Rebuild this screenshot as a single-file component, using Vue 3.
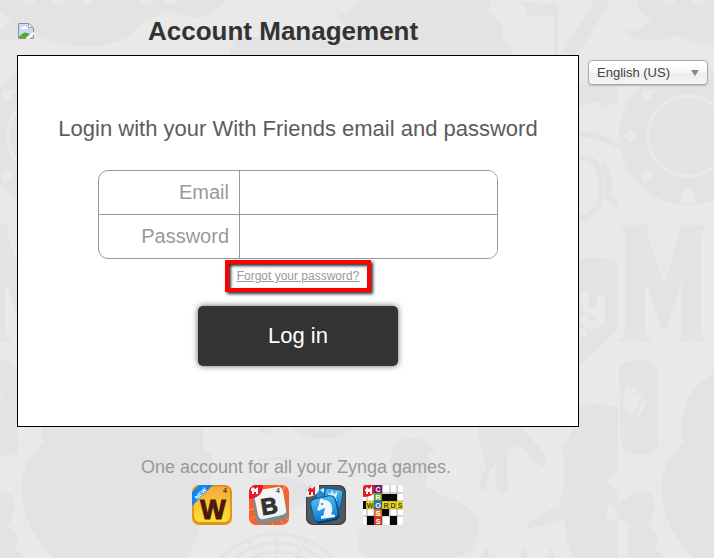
<script setup>
import { ref } from 'vue'

const language = ref('en')
const email = ref('')
const password = ref('')

const crossLetters = [
  { t: 'C', x: 15, y: 4, c: '#7b1f6d', f: '#fff' },
  { t: 'R', x: 15, y: 12, c: '#7aa63a', f: '#fff' },
  { t: 'W', x: 7, y: 20, c: '#efdc2a', f: '#4b4300' },
  { t: 'O', x: 15, y: 20, c: '#2d78c2', f: '#fff' },
  { t: 'R', x: 23, y: 20, c: '#efdc2a', f: '#4b4300' },
  { t: 'D', x: 30, y: 20, c: '#efdc2a', f: '#4b4300' },
  { t: 'S', x: 37, y: 20, c: '#efdc2a', f: '#4b4300' },
  { t: 'S', x: 15, y: 28, c: '#e8762c', f: '#fff' },
  { t: 'S', x: 15, y: 36, c: '#e2382b', f: '#fff' }
]
</script>

<template>
  <div class="page">
    <svg class="backdrop" viewBox="0 0 714 558" aria-hidden="true">
      <defs>
        <g id="tile">
          <path d="M636 0Q638 11 651 20Q641 33 622 31Q648 48 675 35Q701 47 730 47Q758 44 772 35Q781 19 798 17Q806 8 824 16Q845 22 858 8L866 0Z" />
          <circle cx="688" cy="136" r="69" />
          <circle cx="688" cy="136" r="40" fill="none" stroke="#e9e9e9" stroke-width="4" />
          <g fill="#e9e9e9">
            <ellipse cx="669" cy="0" rx="6" ry="5" /><ellipse cx="698" cy="0" rx="6" ry="5" />
            <ellipse cx="727" cy="0" rx="5" ry="4" /><ellipse cx="785" cy="0" rx="7" ry="4" />
            <ellipse cx="811" cy="0" rx="7" ry="4" />
            <path d="M623 136l7-7 7 7-7 7z" />
            <path d="M642 91q4-4 6 1q5-4 6 0l-4 3 3 5-5-1-4 3 0-5q-5 0-2-6z" />
            <path d="M642 171l4 1q2-3 4 1l4-2-1 4q3 2-2 4l-8 4q-3-5-1-12z" />
            <path d="M688 188q7 3 8 12q-3 4-6 1l2 3h-8l2-3q-4 3-6-1q1-8 8-12z" />
          </g>
          <path d="M619 225H648Q646 228 648 236L664 284L679 236Q682 228 678 225H707Q701 228 701 236V330Q702 338 707 341H676Q682 338 682 330V281L664 333L645 281V330Q646 338 653 341H618Q625 338 625 330V236Q625 228 619 225Z" />
          <path d="M619 370Q622 360 639 360Q655 361 658 369V440Q661 445 658 448Q652 455 640 455Q624 455 621 446Z" />
          <path fill="#e9e9e9" d="M626 385l12 3-3 6 8-1-11 23q-9-4-9-16zM645 396q2 10-5 19l-5 2z" />
          <path d="M714 374Q682 390 682 425Q681 439 684 443Q661 462 661 490Q664 530 694 558H826Q852 516 852 455L843 450V413L830 390Q760 340 714 374Z" />
          <path d="M618 502l6-3 3 2q1-10 13-10q15 1 14 12q0 9-3 18q0 3-5 4l6 5q7 6 6 14l-5 6q8 2 13 8H628V535q-2-7 2-11l-12-6z" />
        </g>
      </defs>
      <g fill="#e3e3e3">
        <use href="#tile" />
        <use href="#tile" x="-640" />
        <path d="M0 455Q10 457 18 452V400L0 400Z" />
        <path d="M336 0L338 12Q346 12 356 6L359 0H492L488 12Q503 18 503 38L514 55H228L236 36L350 42L347 26Q336 21 337 8Z" />
        <path d="M515 2L558 4V55H554V16H526V6Z" />
        <path d="M595 0H610L580 53H562Z" />
        <path d="M579 82L618 78V101L606 108Q600 109 602 101Q592 104 579 106Z" />
        <path d="M579 278H618V330L579 366Z" />
        <path d="M579 407Q600 401 618 408V470L605 480L618 493V558H574Q564 540 565 520L560 500Q568 480 562 450L574 427Z" />
        <path d="M579 259Q600 253 618 264V278H579Z" />
        <path d="M390 463Q391 437 412 438Q429 438 435 452L428 454Q430 473 425 486L443 496Q482 507 479 535Q472 558 448 558H368Q353 550 359 532Q377 510 373 492Q377 480 398 484Z" />
        <path d="M477 427H520L535 443Q550 455 544 467Q535 465 521 445L507 450V482Q510 492 502 496Q492 490 496 465L490 470Q487 493 481 491Q477 478 486 468Z" />
        <path d="M290 427H355Q326 449 294 431Z" />
        <path d="M527 525Q548 505 567 507V517Q550 525 527 529Z" />
        <path d="M260 427Q257 433 266 435Q274 433 272 427Z" />
        <ellipse cx="280" cy="493" rx="31" ry="16" />
        <path d="M482 558l4-12 4 12zM520 558l4-14 4 14zM547 558l4-12 4 12z" />
      </g>
      <g fill="none" stroke="#e3e3e3">
        <path stroke-width="6" d="M579 134Q598 134 618 146M579 158Q592 155 599 170Q605 195 596 209Q588 218 579 218M602 165Q611 174 608 190Q607 201 618 204" />
        <g stroke-width="3">
          <circle cx="277" cy="610" r="76" /><circle cx="277" cy="610" r="67" />
          <circle cx="277" cy="610" r="58" /><path d="M277 534V558M248 540L258 558M306 540L296 558" />
        </g>
        <ellipse cx="278" cy="470" rx="38" ry="11" stroke-width="1" />
        <ellipse cx="278" cy="466" rx="30" ry="8" stroke-width="1" />
      </g>
      <g fill="none" stroke="#e9e9e9" stroke-linecap="round">
        <path stroke-width="8" d="M585 295V305Q586 312 593 312Q601 312 601 303V295V318Q600 325 593 325Q585 325 584 319M579 333H583" />
        <path stroke-width="2" d="M342 8L360 3M348 9L357 0M345 16L350 8" />
      </g>
      <path fill="#e9e9e9" d="M609 504Q618 509 618 515L609 523Q604 513 609 504Z" />
    </svg>

    <header class="header">
      <svg class="missing" viewBox="0 0 16 16" aria-hidden="true">
        <path fill="#c6dafc" d="M1 1h10l4 4v10H1z" />
        <path fill="#fff" d="M3 6q0-2 2-2 1-2 3 0 2 0 2 2z" />
        <path fill="#57a935" d="M1 15v-1q5-6 8-4l3 1-4 4z" />
        <path fill="#fff" d="M8 15l7-6v3l-3 3z" />
        <path fill="#fff" stroke="#a0a0a0" d="M10.500 .5v4h4.500" />
        <path fill="none" stroke="#8f8f8f" d="M8 15.500H.5V.5H11l4.500 4.500V9M12 15.500h3.500V12" />
      </svg>
      <h1>Account Management</h1>
    </header>

    <div class="columns">
      <main>
        <form class="card" @submit.prevent>
          <h2>Login with your With Friends email and password</h2>
          <div class="fields">
            <div class="field">
              <label for="email">Email</label>
              <input id="email" v-model="email" type="email" />
            </div>
            <div class="field">
              <label for="password">Password</label>
              <input id="password" v-model="password" type="password" />
            </div>
          </div>
          <div class="forgot"><a href="#">Forgot your password?</a></div>
          <button class="login" type="submit">Log in</button>
        </form>

        <footer class="footer">
          <p>One account for all your Zynga games.</p>
          <div class="games">
            <svg viewBox="0 0 40 40" aria-hidden="true">
              <defs>
                <linearGradient id="gold" x2="0" y2="1">
                  <stop offset="0" stop-color="#f5a83c" /><stop offset="1" stop-color="#fae13b" />
                </linearGradient>
                <clipPath id="round"><rect width="40" height="40" rx="7" /></clipPath>
              </defs>
              <g clip-path="url(#round)">
                <rect width="40" height="40" fill="#e4941b" />
                <rect x="2" y="2" width="36" height="35" rx="6" fill="url(#gold)" />
                <text class="glyph" x="21" y="34" font-size="27" fill="#4a1a06" stroke="#4a1a06">W</text>
                <text class="glyph" x="33" y="8" font-size="7" fill="#5b3307">4</text>
                <path d="M7 0H21L0 21V7Z" fill="#1285f0" />
                <text class="glyph" x="8" y="11" font-size="6" fill="#fff" transform="rotate(-45 8 8)">NEW</text>
              </g>
            </svg>
            <svg viewBox="0 0 40 40" aria-hidden="true">
              <g clip-path="url(#round)">
                <rect width="40" height="40" fill="#f4622d" />
                <path d="M0 25l8-2M2 34l8-6M12 40l3-6M24 40l-1-5M34 40l-3-6M40 35l-5-3M30 0l-1 5M37 0l-3 5" stroke="#ff9964" />
                <path d="M3 12Q3 7 9 6L28 3Q33 2 34 7L39 27Q40 33 35 35L16 39Q10 40 7 35Z" fill="#898989" />
                <path d="M5 10Q5 6 10 5L29 2Q33 2 34 6L37 24Q38 29 33 30L15 34Q10 35 9 30Z" fill="#f3f4f4" />
                <text class="glyph" x="20" y="29" font-size="23" fill="#333" stroke="#333" transform="rotate(-9 20 20)">B</text>
                <text class="glyph" x="29" y="8" font-size="7" fill="#555">4</text>
                <path d="M0 0H14Q14 13 0 14Z" fill="#e71927" />
                <path d="M2 4L4 2L6 4L9 2V9H7V7H5V9H3V6H2Z" fill="#fff" />
              </g>
            </svg>
            <svg viewBox="0 0 40 40" aria-hidden="true">
              <defs>
                <linearGradient id="blue" x2="0" y2="1">
                  <stop offset="0" stop-color="#55baf2" /><stop offset="1" stop-color="#087bcf" />
                </linearGradient>
              </defs>
              <g clip-path="url(#round)">
                <rect width="40" height="40" fill="#343b44" />
                <rect x="1" y="1" width="38" height="38" rx="7" fill="#505862" />
                <rect x="10" y="3" width="16" height="18" rx="3" fill="#268bc7" stroke="#14578c" />
                <rect x="18" y="4" width="18" height="19" rx="3" fill="url(#blue)" stroke="#14578c" transform="rotate(8 27 13)" />
                <path d="M21 6l3 3 2-4 2 4 4-3-2 7 1 3h-8l1-3zM14 5l4-2v5z" fill="#d5eaf6" />
                <rect x="7" y="13" width="25" height="24" rx="5" fill="#06375f" transform="rotate(-12 20 25)" />
                <rect x="6" y="12" width="25" height="23" rx="5" fill="url(#blue)" stroke="#075b9f" transform="rotate(-12 19 24)" />
                <path d="M15 13L18 15Q25 15 26 22Q27 27 25 29L29 30V32L15 34V31L18 30Q17 26 20 23L16 24L13 26L11 24L13 20Q13 16 15 13Z" fill="#edf6fa" />
                <circle cx="16" cy="19" r="1" fill="#176fa6" />
                <path d="M0 0H13V5Q11 12 0 12Z" fill="#eee" />
                <path d="M2 5L4 2L6 4L9 1V10H7V7H5V10H3V6H2Z" fill="#db2028" />
              </g>
            </svg>
            <svg viewBox="0 0 40 40" aria-hidden="true">
              <defs><clipPath id="soft"><rect width="40" height="40" rx="3" /></clipPath></defs>
              <g clip-path="url(#soft)">
                <rect width="40" height="40" fill="#fff" />
                <path d="M4 8V40M19 0V40M27 0V40M34 0V40M0 8H40M0 31H40" stroke="#aaa" fill="none" />
                <path d="M19 9h15v7H19zM0 16h4v8H0zM19 24h7v7h-7zM4 31h7v9H4zM27 31h7v9h-7z" fill="#080808" />
                <g v-for="(l, i) in crossLetters" :key="i">
                  <rect :x="l.x - 4" :y="l.y - 4" width="8" height="8" :fill="l.c" stroke="#3b3516" stroke-width=".3" />
                  <text class="glyph" :x="l.x" :y="l.y + 3" font-size="7" :fill="l.f">{{ l.t }}</text>
                </g>
                <path d="M0 0H11V8Q8 12 0 12Z" fill="#e41b2b" />
                <path d="M2 5L4 2L6 4L9 1V9H7V7H5V9H3V6H2Z" fill="#fff" />
              </g>
            </svg>
          </div>
        </footer>
      </main>

      <div class="language">
        <select v-model="language" aria-label="Language">
          <option value="en">English (US)</option>
        </select>
        <svg viewBox="0 0 8 6" aria-hidden="true"><path d="M0 0h8L4 6z" fill="#888" /></svg>
      </div>
    </div>
  </div>
</template>

<style>
body {
  margin: 0;
  background: #e9e9e9;
}
</style>

<style scoped>
.page {
  position: relative;
  box-sizing: border-box;
  min-height: 100vh;
  padding: 14px 6px 32px 17px;
  overflow: hidden;
  background: #e9e9e9;
  color: #999;
  font-family: "Liberation Sans", Arial, sans-serif;
}
.backdrop {
  position: absolute;
  top: 0;
  left: 0;
  width: 714px;
}
.header,
.columns {
  position: relative;
}
.header {
  display: flex;
  align-items: center;
  gap: 114px;
  padding: 0 1px 7px;
}
.missing {
  width: 16px;
  height: 16px;
}
h1 {
  margin: 0;
  color: #333;
  font-size: 26px;
  line-height: 34px;
}
.columns {
  display: grid;
  grid-template-columns: minmax(0, 1fr) 120px;
  gap: 9px;
  align-items: start;
}
.card {
  display: flex;
  flex-direction: column;
  align-items: center;
  padding: 60px 20px;
  border: 1px solid #000;
  background: #fff;
}
h2 {
  margin: 0 0 28px;
  color: #5c5c5c;
  font-size: 22px;
  font-weight: 400;
  line-height: 26px;
}
.fields {
  box-sizing: border-box;
  width: 100%;
  max-width: 400px;
  overflow: hidden;
  border: 1px solid #999;
  border-radius: 10px;
}
.field {
  display: flex;
  height: 43px;
}
.field + .field {
  border-top: 1px solid #999;
}
.field label {
  box-sizing: border-box;
  width: 140px;
  padding-right: 10px;
  font-size: 20px;
  line-height: 43px;
  text-align: right;
}
.field input {
  flex: 1;
  min-width: 0;
  padding: 0 10px;
  border: 0;
  border-left: 1px solid #999;
  outline: 0;
  background: #fff;
  font: inherit;
  font-size: 20px;
}
.forgot {
  margin: 1px 0 14px;
  padding: 5px 8px;
  border: 4px solid #f00;
  box-shadow: 2px 2px 3px #333, inset 2px 2px 3px #333;
  font-size: 12px;
  line-height: 14px;
}
.forgot a {
  color: #999;
}
.login {
  width: 200px;
  height: 60px;
  border: 0;
  border-radius: 5px;
  background: #333;
  box-shadow: 0 0 6px #666;
  color: #fff;
  font: inherit;
  font-size: 22px;
}
.footer {
  padding: 30px 2px 0 0;
  text-align: center;
}
.footer p {
  margin: 0 2px 8px 0;
  font-size: 18px;
  line-height: 20px;
}
.games {
  display: flex;
  justify-content: center;
  gap: 17px;
}
.games svg {
  width: 40px;
  height: 40px;
}
.glyph {
  font-weight: 700;
  text-anchor: middle;
}
.language {
  position: relative;
  padding-top: 5px;
}
.language select {
  box-sizing: border-box;
  width: 100%;
  height: 25px;
  padding: 0 24px 0 8px;
  border: 1px solid #aaa;
  border-radius: 4px;
  appearance: none;
  background: linear-gradient(#fff 20%, #f6f6f6 50%, #eee 52%, #f4f4f4);
  box-shadow: 0 1px 1px #bbb;
  color: #444;
  font: inherit;
  font-size: 13px;
}
.language svg {
  position: absolute;
  top: 15px;
  right: 9px;
  width: 8px;
  height: 6px;
  pointer-events: none;
}
</style>
